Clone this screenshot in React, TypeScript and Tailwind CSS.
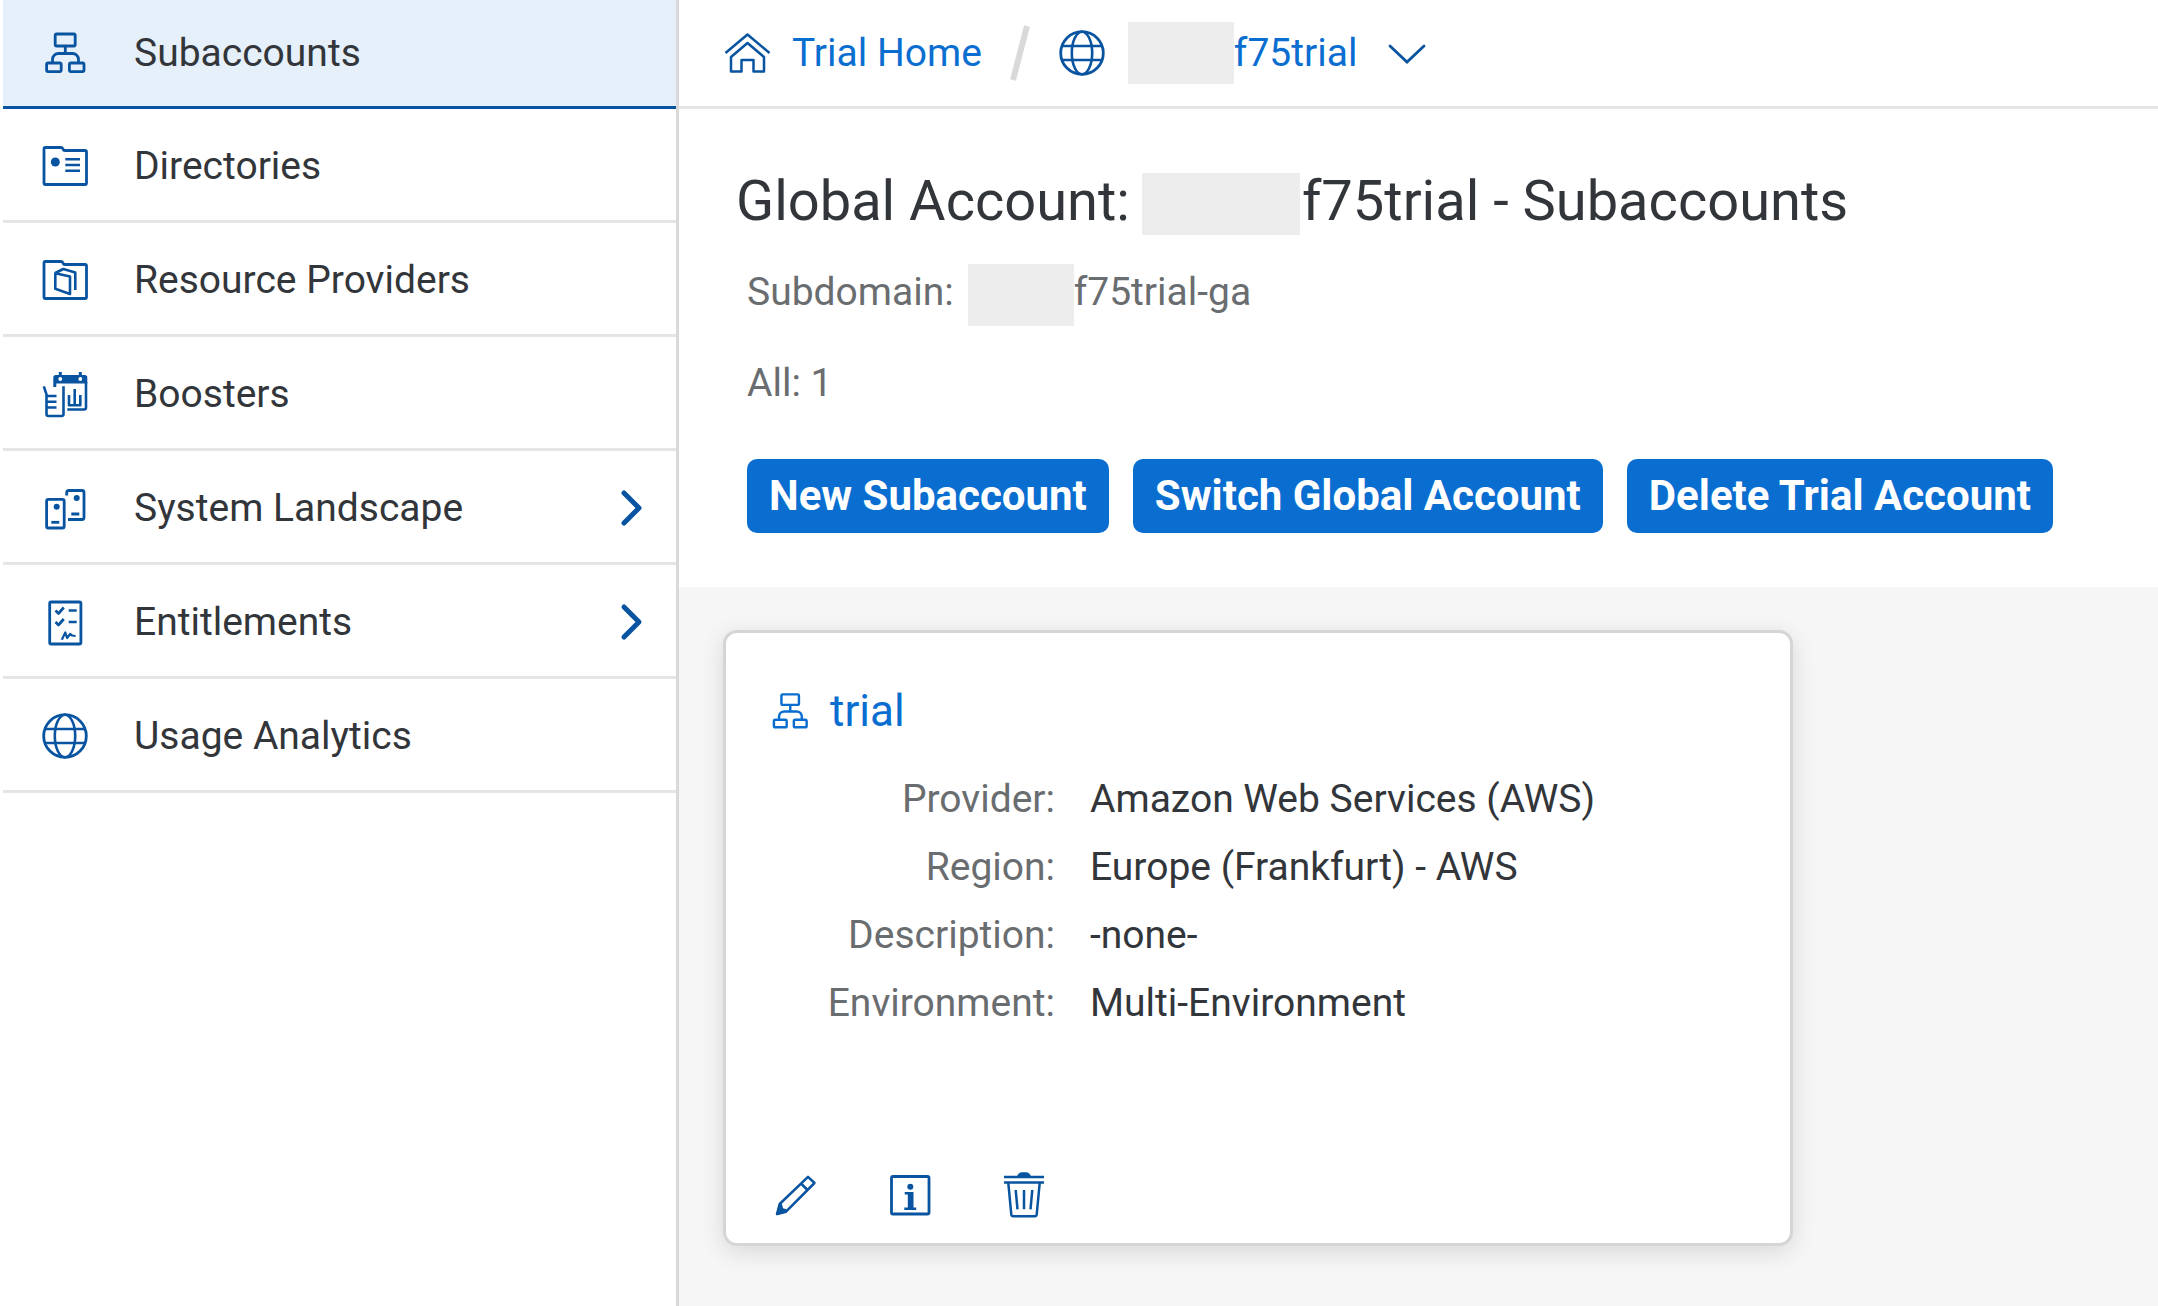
import type { ReactNode } from "react";

type IconProps = { className?: string; children: ReactNode };

function Icon({ className = "size-12", children }: IconProps) {
  return (
    <svg
      viewBox="0 0 48 48"
      className={`shrink-0 ${className}`}
      fill="none"
      stroke="currentColor"
      strokeWidth="2.8"
      strokeLinejoin="round"
      aria-hidden="true"
    >
      {children}
    </svg>
  );
}

const Org = ({ className }: { className?: string }) => (
  <Icon className={className}>
    <rect x="14.2" y="5" width="20" height="12" rx="1.5" />
    <rect x="5.6" y="34" width="14.6" height="8.6" rx="1.5" />
    <rect x="28.4" y="34" width="14.6" height="8.6" rx="1.5" />
    <path d="M24.3 17v8M11.5 34v-3.5a6 6 0 0 1 6-6h14a6 6 0 0 1 6 6V34" />
  </Icon>
);

const folder = "M3 7a1.5 1.5 0 0 1 1.5-1.5H20a2 2 0 0 1 2 1.5c.3 1 1 1.5 2 1.5h20a1.5 1.5 0 0 1 1.5 1.5V41a1.5 1.5 0 0 1-1.5 1.5H4.5A1.5 1.5 0 0 1 3 41z";

const Directory = () => (
  <Icon>
    <path d={folder} />
    <circle cx="14.3" cy="20" r="4.5" fill="currentColor" stroke="none" />
    <path d="M24.3 17.3H39M24.3 23H39M24.3 28.7H39" strokeWidth="2.5" />
  </Icon>
);

const Provider = () => (
  <Icon>
    <path d={folder} />
    <path d="M14.3 17.3 29 20.5V38L14.3 32.7zM14.3 17l8-4 12 3.5v17.5" strokeWidth="2.6" />
  </Icon>
);

const Booster = () => (
  <Icon>
    <path d="M12.3 17V7.5A2.5 2.5 0 0 1 14.8 5h29a2.5 2.5 0 0 1 2.5 2.5v6h-31V17z" fill="currentColor" stroke="none" />
    <path d="M19.3 2v4M39.3 2v4" strokeWidth="3" />
    <circle cx="19.3" cy="9" r="1.9" fill="#fff" stroke="none" />
    <circle cx="39.3" cy="9" r="1.9" fill="#fff" stroke="none" />
    <path d="M45 12v25.5a2 2 0 0 1-2 2H26.3M28 25v10.3h11.3V25M33.7 19v16" strokeWidth="2.6" />
    <path d="M2.8 16.3l2.7 8V44a2 2 0 0 0 2 2h13a2 2 0 0 0 2-2V16.3M5.5 26h10M5.5 31.8h10M5.5 37.5h10" strokeWidth="2.6" />
  </Icon>
);

const Landscape = () => (
  <Icon>
    <rect x="5.6" y="15.4" width="17.6" height="28.6" rx="1.8" />
    <circle cx="15.7" cy="22.7" r="3" fill="currentColor" stroke="none" />
    <path d="M10.3 38.3h8" />
    <path d="M25.7 11.5V8.5a2 2 0 0 1 2-2H41a2 2 0 0 1 2 2v25a2 2 0 0 1-2 2H27M30.3 30h8" />
    <circle cx="35.7" cy="14" r="3" fill="currentColor" stroke="none" />
  </Icon>
);

const Entitlement = () => (
  <Icon>
    <rect x="8.7" y="4" width="31.2" height="42" rx="1.5" />
    <path d="M14.5 12.5l3 3L22.8 9.5M14.5 24l3 3 5.3-6M27.7 12.5h8M27.7 24h8" strokeWidth="2.7" />
    <path d="M20.8 41.8l3.5-7.3 1.8 5.5 3-4 2 1.5 3.5.5" strokeWidth="2.2" />
  </Icon>
);

const Globe = () => (
  <Icon>
    <circle cx="24" cy="24" r="21.3" />
    <ellipse cx="24" cy="24" rx="10.2" ry="21.3" strokeWidth="2.6" />
    <path d="M4 17h40M4 31h40" strokeWidth="2.6" />
  </Icon>
);

const Home = () => (
  <Icon>
    <path d="M1.5 24 23.5 5.5 45.5 24" strokeWidth="2.5" />
    <path d="M7 42.5V28L23.5 14 40 28v14.5H29.5V31h-12v11.5z" strokeWidth="2.5" />
  </Icon>
);

const Pencil = () => (
  <Icon>
    <path d="M5 43l2.7-10L36 5.8l6.5 6.2-28.5 28.7zM29 12.5l6.5 6.5" strokeWidth="2.5" />
    <path d="M4 44.3l3-12 3 1 1 4 3.5 1 .5 3z" fill="currentColor" stroke="none" />
  </Icon>
);

const Info = () => (
  <Icon>
    <rect x="5.5" y="5.5" width="37.5" height="37.5" rx="1.5" />
    <circle cx="24.3" cy="15.7" r="3" fill="currentColor" stroke="none" />
    <path d="M18.7 21h8.8v15.5h2.7V39H18.3v-2.5h3.5v-13h-3.1z" fill="currentColor" stroke="none" />
  </Icon>
);

const Trash = () => (
  <Icon>
    <path d="M4 6h40M4 11.5h40M8.3 12l3 31.5a2 2 0 0 0 2 1.8h21.4a2 2 0 0 0 2-1.8l3-31.5M15.7 19l1.8 19.3M24 19v19.3M32.3 19l-1.8 19.3" strokeWidth="2.5" />
    <path d="M17 5.5c1-3 3-4.2 5-4.2h4c2 0 4 1.2 5 4.2z" fill="currentColor" stroke="none" />
  </Icon>
);

const navItems = [
  { label: "Subaccounts", icon: <Org /> },
  { label: "Directories", icon: <Directory /> },
  { label: "Resource Providers", icon: <Provider /> },
  { label: "Boosters", icon: <Booster /> },
  { label: "System Landscape", icon: <Landscape />, expandable: true },
  { label: "Entitlements", icon: <Entitlement />, expandable: true },
  { label: "Usage Analytics", icon: <Globe /> },
];

const details = [
  ["Provider:", "Amazon Web Services (AWS)"],
  ["Region:", "Europe (Frankfurt) - AWS"],
  ["Description:", "-none-"],
  ["Environment:", "Multi-Environment"],
];

const actions = ["New Subaccount", "Switch Global Account", "Delete Trial Account"];

const cardActions = [
  { label: "Edit", icon: <Pencil /> },
  { label: "Information", icon: <Info /> },
  { label: "Delete", icon: <Trash /> },
];

export default function App() {
  return (
    <div className="flex min-h-screen bg-white font-['Roboto',sans-serif] text-[39px] leading-[48px] text-[#32363a]">
      <nav className="w-[679px] shrink-0 border-r-3 border-[#d9d9d9] pl-[3px]" aria-label="Main">
        <ul>
          {navItems.map((item, i) => (
            <li key={item.label}>
              <a
                href="#"
                aria-current={i === 0 ? "page" : undefined}
                className={
                  i === 0
                    ? "flex h-[109px] items-center gap-[45px] border-b-3 border-[#0854a0] bg-[#e5f0fa] pr-8 pl-[38px]"
                    : "flex h-[114px] items-center gap-[45px] border-b-3 border-[#e5e5e5] pt-[2px] pr-8 pl-[38px]"
                }
              >
                <span className="text-[#0854a0]">{item.icon}</span>
                <span className="grow">{item.label}</span>
                {item.expandable && (
                  <svg viewBox="0 0 24 40" className="h-10 w-6 text-[#0854a0]" fill="none" stroke="currentColor" strokeWidth="5" strokeLinecap="round" strokeLinejoin="round" aria-hidden="true">
                    <path d="M4 5l15 15L4 35" />
                  </svg>
                )}
              </a>
            </li>
          ))}
        </ul>
      </nav>

      <main className="flex min-w-0 grow flex-col">
        <nav className="flex h-[109px] items-center border-b-3 border-[#e5e5e5] pl-[45px] text-[#0a6ed1]" aria-label="Breadcrumb">
          <a href="#" className="flex items-center gap-5">
            <span className="text-[#0854a0]"><Home /></span>
            Trial Home
          </a>
          <svg viewBox="0 0 24 56" className="mx-[26px] h-14 w-6" fill="none" stroke="#d9d9d9" strokeWidth="6" aria-hidden="true">
            <path d="M19 1 5 55" />
          </svg>
          <button type="button" className="flex items-center text-[#0a6ed1]">
            <span className="text-[#0854a0]"><Globe /></span>
            <span className="ml-[22px] h-[62px] w-[106px] bg-[#ededed]" />
            f75trial
            <svg viewBox="0 0 40 24" className="ml-[30px] h-6 w-10 text-[#0854a0]" fill="none" stroke="currentColor" strokeWidth="2.8" strokeLinecap="round" aria-hidden="true">
              <path d="M3 5l17 16L37 5" />
            </svg>
          </button>
        </nav>

        <header className="flex flex-col items-start px-[57px] pt-[58px] pb-[54px]">
          <h1 className="flex items-center text-[56px] leading-[64px]">
            Global Account:
            <span className="mt-[6px] mr-[2px] ml-3 h-[62px] w-[158px] bg-[#ededed]" />
            f75trial - Subaccounts
          </h1>
          <div className="flex w-full flex-col items-start pl-[11px]">
            <p className="mt-[26px] flex h-[62px] items-center text-[#6a6d70]">
              Subdomain:
              <span className="mt-[6px] ml-[14px] h-[62px] w-[106px] bg-[#ededed]" />
              f75trial-ga
            </p>
            <p className="mt-9 text-[#6a6d70]">All: 1</p>
            <div className="mt-13 flex gap-6">
              {actions.map((label) => (
                <button key={label} type="button" className="h-[74px] rounded-[10px] bg-[#0a6ed1] px-[22px] text-[42px] font-bold whitespace-nowrap text-white">
                  {label}
                </button>
              ))}
            </div>
          </div>
        </header>

        <section className="grow bg-[#f6f6f6] px-11 pt-[43px] pb-15">
          <article className="flex min-h-[616px] w-full max-w-[1070px] flex-col rounded-[14px] border-3 border-[#d5d5d5] bg-white px-[43px] pt-12 pb-6 shadow-[0_6px_24px_rgba(0,0,0,0.12)]">
            <h2 className="text-[44px] leading-[60px]">
              <a href="#" className="flex items-center gap-[19px] text-[#0a6ed1]">
                <Org className="size-[42px]" />
                trial
              </a>
            </h2>
            <dl className="mt-6 grid grid-cols-[286px_1fr] gap-x-[35px]">
              {details.map(([term, value]) => (
                <div key={term} className="col-span-2 grid h-[68px] grid-cols-subgrid items-center">
                  <dt className="text-right text-[#6a6d70]">{term}</dt>
                  <dd>{value}</dd>
                </div>
              ))}
            </dl>
            <div className="mt-auto flex gap-[66px] pl-[3px] text-[#0854a0]">
              {cardActions.map((action) => (
                <button key={action.label} type="button" aria-label={action.label}>
                  {action.icon}
                </button>
              ))}
            </div>
          </article>
        </section>
      </main>
    </div>
  );
}
